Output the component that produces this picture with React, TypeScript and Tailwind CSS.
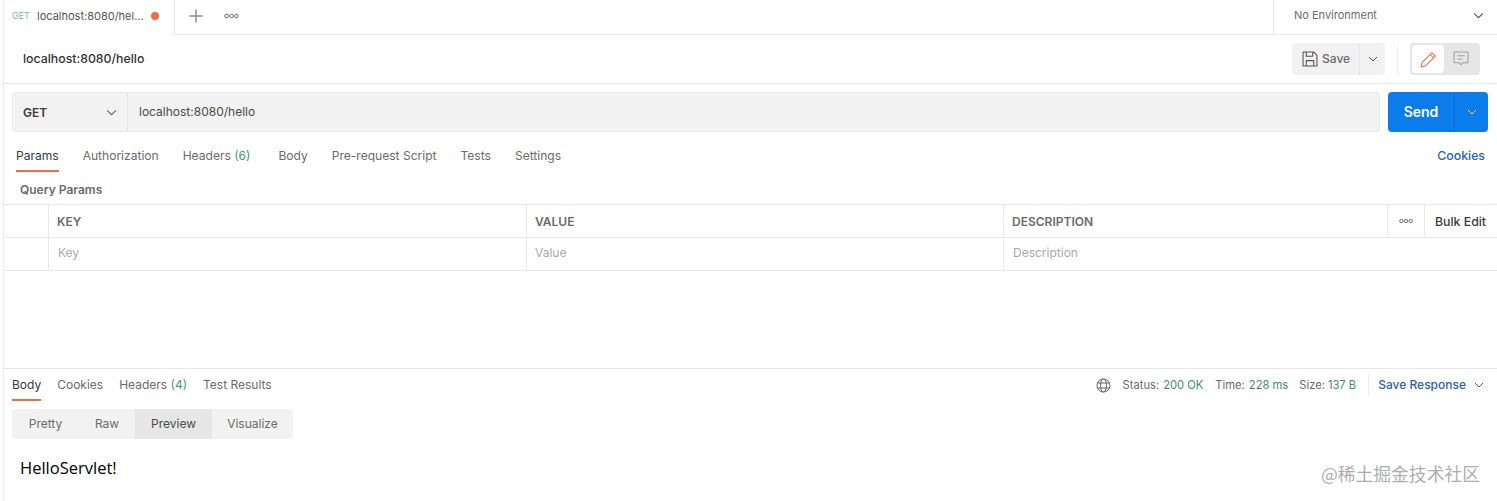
import React from "react";

const Chev = ({ className = "", size = 10 }: { className?: string; size?: number }) => (
  <svg width={size} height={size} viewBox="0 0 10 10" fill="none" stroke="currentColor" strokeWidth="1" className={className}>
    <path d="M1 3l4 4 4-4" />
  </svg>
);

const Dots = ({ w = 15 }: { w?: number }) => (
  <svg width={w} height="6" viewBox="0 0 15 6" fill="none" stroke="#6b6b6b" strokeWidth="1">
    <circle cx="2.5" cy="3" r="1.8" />
    <circle cx="7.5" cy="3" r="1.8" />
    <circle cx="12.5" cy="3" r="1.8" />
  </svg>
);

const Tab = ({ children, active, className = "" }: { children: React.ReactNode; active?: boolean; className?: string }) => (
  <div className={`relative flex items-center h-full ${active ? "text-[#3a3a3a]" : "text-[#6b6b6b]"} ${className}`}>
    {children}
    {active && <div className="absolute left-0 right-0 bottom-0 h-[2px] bg-[#e6703f]" />}
  </div>
);

export default function App() {
  return (
    <div className="w-[1497px] h-[501px] overflow-hidden bg-white pl-[3px] relative text-[12px] font-['Inter','Liberation_Sans',sans-serif]">
      <div className="h-full flex flex-col border-l border-[#ececec]">
        {/* Top tabs */}
        <div className="h-[35px] shrink-0 flex items-stretch border-b border-[#e8e8e8]">
          <div className="w-[171px] -mb-px bg-white border-r border-[#e8e8e8] flex items-center pl-[8px] pb-[3px] relative z-10">
            <span className="text-[9px] text-[#7fb592] w-[25px]">GET</span>
            <span className="text-[#555] text-[11px] w-[114px] whitespace-nowrap">localhost:8080/hel...</span>
            <span className="w-2 h-2 rounded-full bg-[#f26b3a]" />
          </div>
          <div className="flex items-center pl-[14px] pb-[3px]">
            <svg width="14" height="14" viewBox="0 0 14 14" stroke="#8a8a8a" strokeWidth="1.4">
              <path d="M7 0.5v13M0.5 7h13" />
            </svg>
            <span className="ml-[21px] flex"><Dots /></span>
          </div>
          <div className="ml-auto w-[224px] border-l border-[#e8e8e8] flex items-center pl-[20px] pr-[13px] pb-[3px] text-[#6b6b6b] text-[11px] justify-between">
            <span>No Environment</span>
            <Chev size={11} className="text-[#555]" />
          </div>
        </div>

        {/* Title row */}
        <div className="h-[49px] shrink-0 flex items-center border-b border-[#e8e8e8] pl-[19px] pr-[17px]">
          <span className="font-medium text-[#333] text-[12.3px]">localhost:8080/hello</span>
          <div className="ml-auto flex items-center">
            <div className="flex h-[32px] w-[93px] rounded bg-[#f2f2f2] items-stretch">
              <div className="w-[68px] flex items-center pl-[10px] gap-[4px] border-r border-[#e8e8e8]">
                <svg width="16" height="16" viewBox="0 0 15 15" fill="none" stroke="#555" strokeWidth="1">
                  <path d="M1 1h10l3 3v10H1zM4 1v4h6V1M4 14V9h7v5" />
                </svg>
                <span className="text-[#6b6b6b] font-medium">Save</span>
              </div>
              <div className="flex-1 flex items-center justify-center text-[#555]"><Chev /></div>
            </div>
            <div className="w-px h-[32px] bg-[#efefef] mx-[12px]" />
            <div className="flex w-[70px] h-[32px] rounded bg-[#e6e6e6] p-[2px]">
              <div className="w-[32px] bg-white rounded flex items-center justify-center">
                <svg width="17" height="17" viewBox="0 0 15 15" fill="none" stroke="#e8794a" strokeWidth="1">
                  <path d="M1 14l1-4 8.500-8.500 3 3L5 13zM9 3l3 3" />
                </svg>
              </div>
              <div className="flex-1 flex items-center justify-center">
                <svg width="16" height="16" viewBox="0 0 15 15" fill="none" stroke="#a0a0a0" strokeWidth="1">
                  <path d="M1 1h13v10H9l-1.500 2L6 11H1zM4 4.500h7M4 7.500h5" />
                </svg>
              </div>
            </div>
          </div>
        </div>

        {/* URL row */}
        <div className="h-[40px] shrink-0 mt-[8px] flex pl-[8px] pr-[9px] items-stretch">
          <div className="flex-1 flex bg-[#f2f2f2] rounded border border-[#ebebeb]">
            <div className="w-[115px] flex items-center justify-between pl-[10px] pr-[10px] border-r border-[#e3e3e3] font-semibold text-[#3a3a3a]">
              <span className="mt-[1px]">GET</span>
              <Chev size={11} className="text-[#666]" />
            </div>
            <div className="flex items-center pl-[11px] text-[#4a4a4a]">localhost:8080/hello</div>
          </div>
          <div className="w-[100px] ml-[8px] bg-[#0a7ceb] rounded flex text-white">
            <div className="w-[67px] flex items-center justify-center pb-[1px] text-[14px] font-semibold border-r border-[#0a6fd4]">Send</div>
            <div className="flex-1 flex items-center justify-center"><Chev /></div>
          </div>
        </div>

        {/* Request tabs */}
        <div className="h-[40px] shrink-0 flex items-stretch pl-[12px] pr-[12px] text-[12.050px]">
          <Tab active className="pt-[8px]">Params</Tab>
          <Tab className="ml-[24px] pt-[8px]">Authorization</Tab>
          <Tab className="ml-[24px] pt-[8px]">Headers&nbsp;<span className="text-[#3e9b6c]">(6)</span></Tab>
          <Tab className="ml-[28px] pt-[8px]">Body</Tab>
          <Tab className="ml-[24px] pt-[8px]">Pre-request Script</Tab>
          <Tab className="ml-[24px] pt-[8px]">Tests</Tab>
          <Tab className="ml-[24px] pt-[8px]">Settings</Tab>
          <div className="ml-auto flex items-center pt-[8px] text-[#2a62b8] font-medium text-[12.300px]">Cookies</div>
        </div>

        <div className="h-[32px] shrink-0 flex items-center pt-[3px] pl-[16px] font-semibold text-[#6b6b6b] text-[12px]">Query Params</div>

        {/* Table */}
        <div className="shrink-0 border-t border-[#e8e8e8]">
          <div className="h-[33px] flex border-b border-[#e8e8e8] font-semibold text-[#6b6b6b] text-[12px]">
            <div className="w-[45px] border-r border-[#e8e8e8]" />
            <div className="w-[478px] border-r border-[#e8e8e8] flex items-center pl-[8px] pt-[2px]">KEY</div>
            <div className="w-[477px] border-r border-[#e8e8e8] flex items-center pl-[8px] pt-[2px]">VALUE</div>
            <div className="w-[384px] border-r border-[#e8e8e8] flex items-center pl-[8px] pt-[2px]">DESCRIPTION</div>
            <div className="w-[37px] border-r border-[#e8e8e8] flex items-center justify-center"><Dots w={14} /></div>
            <div className="flex-1 flex items-center pl-[10px] pt-[2px] text-[#3a3a3a] font-medium text-[12.300px] whitespace-nowrap">Bulk Edit</div>
          </div>
          <div className="h-[33px] flex border-b border-[#e8e8e8] text-[#a9a9a9]">
            <div className="w-[45px] border-r border-[#e8e8e8]" />
            <div className="w-[478px] border-r border-[#e8e8e8] flex items-center pl-[9px] pb-[2px]">Key</div>
            <div className="w-[477px] border-r border-[#e8e8e8] flex items-center pl-[8px] pb-[2px]">Value</div>
            <div className="flex-1 flex items-center pl-[9px] pb-[2px]">Description</div>
          </div>
        </div>

        <div className="flex-1 min-h-0" />

        {/* Response */}
        <div className="h-[133px] shrink-0 border-t border-[#e8e8e8] flex flex-col">
          <div className="h-[32px] shrink-0 flex items-stretch pl-[8px] pr-[13px]">
            <Tab active>Body</Tab>
            <Tab className="ml-[16px]">Cookies</Tab>
            <Tab className="ml-[16px]">Headers&nbsp;<span className="text-[#3e9b6c]">(4)</span></Tab>
            <Tab className="ml-[16px]">Test Results</Tab>
            <div className="ml-auto flex items-center text-[11.200px] text-[#6b6b6b]">
              <svg width="15" height="15" viewBox="0 0 15 15" fill="none" stroke="#666" strokeWidth="1" className="mr-[12px]">
                <circle cx="7.500" cy="7.500" r="6.500" />
                <ellipse cx="7.500" cy="7.500" rx="3" ry="6.500" />
                <path d="M1.500 5h12M1.500 10h12" />
              </svg>
              <span className="mr-[4px]">Status:</span><span className="text-[#3e8f68]">200 OK</span>
              <span className="ml-[12px] mr-[4px]">Time:</span><span className="text-[#3e8f68]">228 ms</span>
              <span className="ml-[11px] mr-[3px]">Size:</span><span className="text-[#3e8f68]">137 B</span>
              <div className="w-px h-[22px] bg-[#eeeeee] ml-[12px] mr-[9px]" />
              <span className="text-[#2a62b8] font-medium text-[12px]">Save Response</span>
              <Chev className="ml-[8px] text-[#2a62b8]" />
            </div>
          </div>
          <div className="mt-[8px] ml-[8px] h-[30px] w-[281px] shrink-0 flex bg-[#f2f2f2] rounded text-[#6b6b6b]">
            <div className="w-[67px] flex items-center justify-center pb-[1px]">Pretty</div>
            <div className="w-[56px] flex items-center justify-center pb-[1px]">Raw</div>
            <div className="w-[77px] flex items-center justify-center pb-[1px] bg-[#e6e6e6] text-[#4a4a4a]">Preview</div>
            <div className="flex-1 flex items-center justify-center pb-[1px]">Visualize</div>
          </div>
          <div className="mt-[17px] ml-[16px] text-[16.500px] leading-[24px] text-black font-['Open_Sans',sans-serif]">HelloServlet!</div>
        </div>
      </div>

      <div className="absolute right-[17px] bottom-[16px] text-[17.800px] leading-[24px] text-[#9a9a9a] opacity-80 font-['Noto_Sans_CJK_SC','Noto_Sans',sans-serif]">@稀土掘金技术社区</div>
    </div>
  );
}
